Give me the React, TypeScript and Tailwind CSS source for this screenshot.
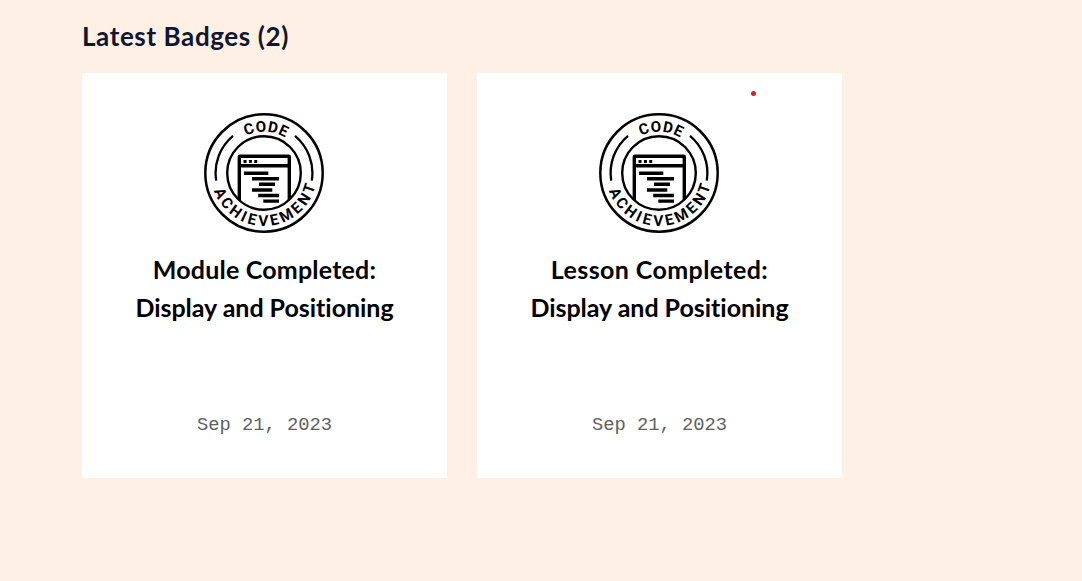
import React from "react";

function AchievementBadge({ id }: { id: string }) {
  return (
    <svg viewBox="0 0 120 120" className="mr-px size-[120px] shrink-0" fill="none" stroke="#000">
      <defs>
        <path id={`${id}-top`} d="M18.7 60A41.3 41.3 0 0 1 101.3 60" />
        <path id={`${id}-bottom`} d="M9.9 77.6A53.1 53.1 0 0 0 112.1 70" />
        <clipPath id={`${id}-clip`}>
          <circle cx="60" cy="60" r="37" />
        </clipPath>
      </defs>
      <circle cx="60" cy="60" r="58.7" strokeWidth="2.5" />
      <circle cx="60" cy="60" r="36.8" strokeWidth="2.4" />
      <path d="M12.2 67.6A48.4 48.4 0 0 1 29 22.8M107.8 67.6A48.4 48.4 0 0 0 91 22.8" strokeWidth="2.3" />
      <g clipPath={`url(#${id}-clip)`}>
        <path d="M35.3 100V43.9a.6.6 0 0 1 .6-.6H84.7a.6.6 0 0 1 .6.6V100M35 52.8H86" strokeWidth="3.4" />
      </g>
      <path
        d="M39.5 47h3v2.9h-3zM44.9 47h3v2.9h-3zM50.2 47h3v2.9h-3zM40 58.6h24.3v3.4H40zM48 64h27v3.4H48zM55 69.5h16v3.4H55zM48 75.2h20.3v3.5H48zM54.2 80.8H75v3.4H54.2zM59.3 86.4H75v3.4H59.3z"
        fill="#000"
        stroke="none"
      />
      <g fill="#000" stroke="none" className="font-['Roboto',sans-serif] text-[15.2px] font-bold">
        <text>
          <textPath href={`#${id}-top`} startOffset="46" textLength="41">CODE</textPath>
        </text>
        <text>
          <textPath href={`#${id}-bottom`} startOffset="0" textLength="135.5">ACHIEVEMENT</textPath>
        </text>
      </g>
    </svg>
  );
}

function BadgeCard({ id, title, titleClass }: { id: string; title: string; titleClass: string }) {
  return (
    <article className="flex h-[405px] w-[365px] flex-col items-center rounded-[2px] bg-white pt-10 pb-[38px]">
      <AchievementBadge id={id} />
      <h3 className="mt-[17px] flex flex-col items-center font-['Lato',sans-serif] text-[25px] leading-[38px] font-bold text-black [font-variant-ligatures:none]">
        <span className={titleClass}>{title}</span>
        <span className="tracking-[-0.03px]">Display and Positioning</span>
      </h3>
      <time className="mt-auto font-['Liberation_Mono',monospace] text-[18.8px] leading-[30px] text-[#606060]">
        Sep 21, 2023
      </time>
    </article>
  );
}

export default function App() {
  return (
    <main className="h-[581px] w-[1082px] bg-[#fff0e5] pt-[17px] pl-[82px]">
      <h2 className="h-14 font-['Lato',sans-serif] text-[26px] leading-[38px] font-bold tracking-[0.6px] text-[#10162f]">
        Latest Badges (2)
      </h2>
      <div className="flex gap-[30px]">
        <BadgeCard id="module" title="Module Completed:" titleClass="tracking-[0.2px]" />
        <div className="relative">
          <BadgeCard id="lesson" title="Lesson Completed:" titleClass="tracking-[0.4px]" />
          <span className="absolute top-[18px] left-[274px] size-[5px] rounded-full bg-[#d91e28]" />
        </div>
      </div>
    </main>
  );
}
